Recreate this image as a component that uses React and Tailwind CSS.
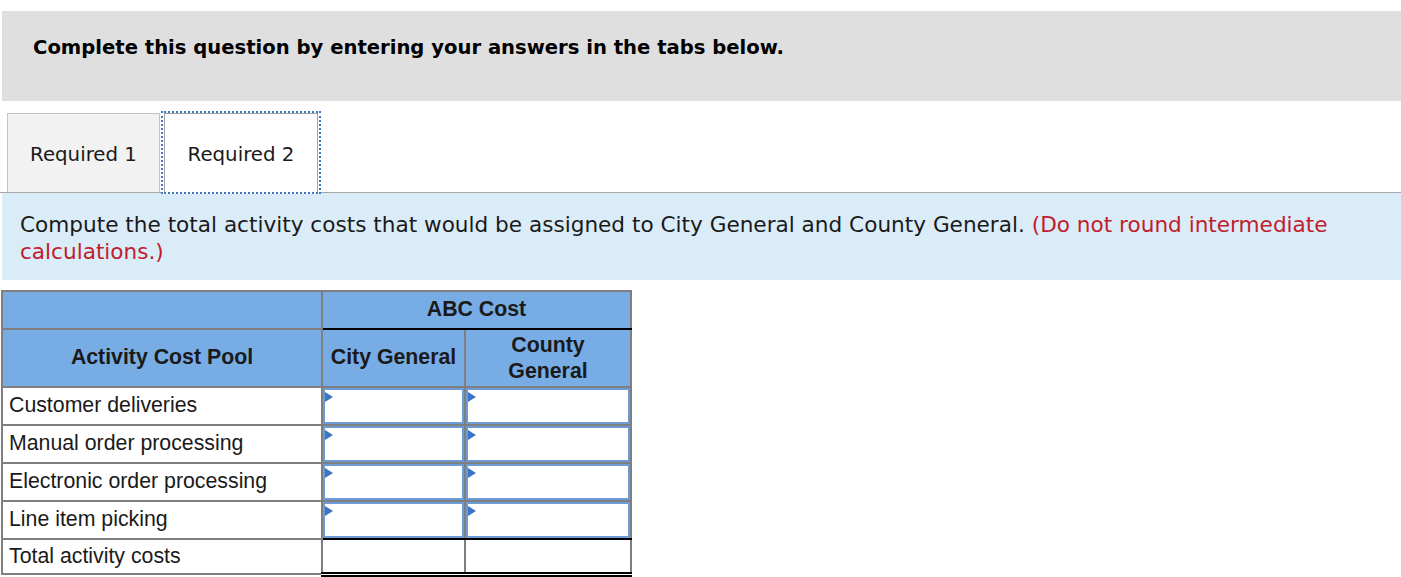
import React from "react";

const verdana = { fontFamily: '"DejaVu Sans", Verdana, sans-serif' };

function InputCell({ last }) {
  return (
    <td className={last ? "p-0 border-2 border-[#7f7f7f] border-b-black h-[38px]" : "p-0 border-2 border-[#7f7f7f] h-[38px]"}>
      <div className="relative h-[36px] border-2 border-[#6d9bd6] bg-white">
        <svg className="absolute left-0 top-[2px]" width="8" height="10" viewBox="0 0 8 10">
          <polygon points="0,0 8,5 0,10" fill="#3a76c2" />
        </svg>
      </div>
    </td>
  );
}

export default function App() {
  const rows = [
    "Customer deliveries",
    "Manual order processing",
    "Electronic order processing",
    "Line item picking",
  ];
  return (
    <div className="w-[1401px] h-[577px] bg-white overflow-hidden" style={{ fontFamily: '"Liberation Sans", Arial, sans-serif' }}>
      <div className="h-[11px]" />
      <div className="ml-[2px] h-[90px] bg-[#dfdfdf] pl-[31px] pt-[25px]" style={verdana}>
        <div className="text-[19.6px] font-bold text-black leading-[24px]">
          Complete this question by entering your answers in the tabs below.
        </div>
      </div>
      <div className="mt-[12px] flex items-start border-b border-[#a6a6a6] h-[80px]" style={verdana}>
        <div className="ml-[7px] w-[153px] h-[79px] bg-[#f2f2f2] border-[1.5px] border-b-0 border-[#c4c4c4] flex items-center justify-center text-[19.8px] text-[#1a1a1a] pt-[3px]">
          Required 1
        </div>
        <div className="relative z-10 ml-[1px] -mt-[2px] w-[160px] h-[83px] border-2 border-dotted border-[#3a78c3] bg-white">
          <div className="ml-[1px] w-[154px] h-[79px] bg-white border-[1.5px] border-b-0 border-[#a0a0a0] flex items-center justify-center text-[19.8px] text-[#1a1a1a] pt-[3px]">
            Required 2
          </div>
        </div>
      </div>
      <div className="ml-[2px] h-[87px] bg-[#dbecf9] pl-[18px] pt-[18px] text-[21.6px] leading-[27px] text-[#1a1a1a]" style={verdana}>
        Compute the total activity costs that would be assigned to City General and County General.{" "}
        <span className="text-[#c0202a]">
          (Do not round intermediate
          <br />
          calculations.)
        </span>
      </div>
      <table className="mt-[10px] ml-[1px] border-collapse table-fixed text-[21.3px] text-[#1a1a1a]">
        <colgroup>
          <col className="w-[320px]" />
          <col className="w-[143px]" />
          <col className="w-[166px]" />
        </colgroup>
        <thead>
          <tr className="bg-[#77ace4] h-[38px]">
            <th className="border-2 border-[#7f7f7f]" />
            <th colSpan={2} className="border-2 border-[#7f7f7f] border-b-black font-bold text-center">
              ABC Cost
            </th>
          </tr>
          <tr className="bg-[#77ace4] h-[58px]">
            <th className="border-2 border-[#7f7f7f] font-bold text-center">Activity Cost Pool</th>
            <th className="border-2 border-[#7f7f7f] border-t-black font-bold text-center whitespace-nowrap px-0">City General</th>
            <th className="border-2 border-[#7f7f7f] border-t-black font-bold text-center leading-[26px] px-[20px]">County General</th>
          </tr>
        </thead>
        <tbody>
          {rows.map((r, i) => (
            <tr key={r} className="h-[38px]">
              <td className="border-2 border-[#7f7f7f] pl-[6px] whitespace-nowrap">{r}</td>
              <InputCell last={i === rows.length - 1} />
              <InputCell last={i === rows.length - 1} />
            </tr>
          ))}
          <tr className="h-[35px]">
            <td className="border-2 border-[#7f7f7f] pl-[6px] pt-[1px]">Total activity costs</td>
            <td className="p-0 border-2 border-[#7f7f7f] border-t-black border-b-[5px] border-b-black [border-bottom-style:double]" />
            <td className="p-0 border-2 border-[#7f7f7f] border-t-black border-b-[5px] border-b-black [border-bottom-style:double]" />
          </tr>
        </tbody>
      </table>
    </div>
  );
}
